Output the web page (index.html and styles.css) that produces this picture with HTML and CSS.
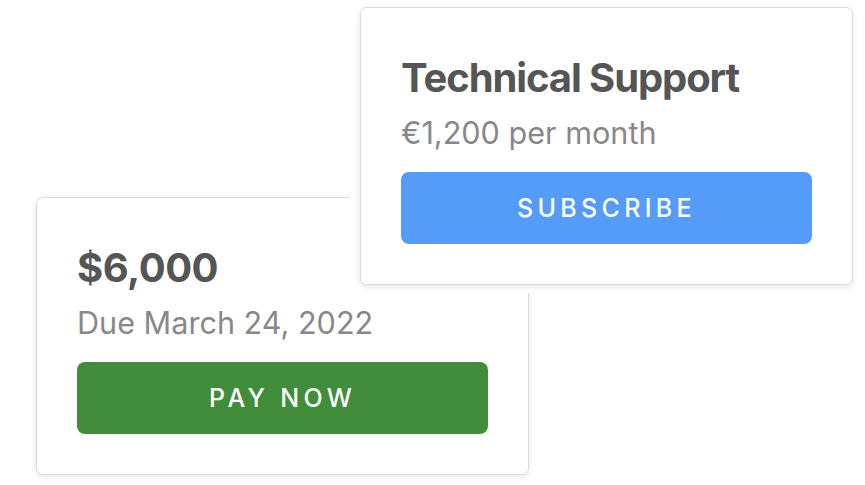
FILE: index.html
```html
<!DOCTYPE html>
<html>
<head>
<meta charset="utf-8">
<link rel="stylesheet" href="styles.css">
</head>
<body>
<div class="stage">
  <div class="card card-back">
    <div class="title">$6,000</div>
    <div class="sub">Due March 24, 2022</div>
    <button class="btn btn-green">PAY NOW</button>
  </div>
  <div class="front-wrap">
    <div class="card">
      <div class="title title-long">Technical Support</div>
      <div class="sub">€1,200 per month</div>
      <button class="btn btn-blue">SUBSCRIBE</button>
    </div>
  </div>
</div>
</body>
</html>
```

FILE: styles.css
```css
html, body {
  margin: 0;
  padding: 0;
  background: #fff;
}
body {
  font-family: Inter, "Noto Sans", sans-serif;
  width: 865px;
  height: 485px;
  overflow: hidden;
}
.stage {
  position: relative;
  width: 865px;
  height: 485px;
  padding: 197px 0 0 36px;
  box-sizing: border-box;
}
.card {
  width: 493px;
  box-sizing: border-box;
  background: #fff;
  border: 1px solid #dcdcdc;
  border-radius: 7px;
  box-shadow: 0 2px 6px rgba(0, 0, 0, 0.10);
  padding: 46px 40px 40px 40px;
  display: flex;
  flex-direction: column;
}
.title {
  font-size: 40px;
  line-height: 48px;
  font-weight: 700;
  color: #555555;
  letter-spacing: -0.5px;
}
.title-long {
  letter-spacing: -1.1px;
}
.sub {
  font-size: 30.6px;
  line-height: 40px;
  color: #888888;
  margin-top: 11px;
}
.btn {
  margin-top: 19px;
  height: 72px;
  border: none;
  border-radius: 8px;
  color: #fff;
  font-family: Inter, "Noto Sans", sans-serif;
  font-size: 25px;
  font-weight: 500;
  letter-spacing: 4.3px;
  padding: 0;
}
.btn-green { background: #428d3c; }
.btn-blue { background: #559cf8; }
.front-wrap {
  position: absolute;
  left: 349px;
  top: 0;
  padding: 7px 11px 8px 11px;
  background: #fff;
}
```
